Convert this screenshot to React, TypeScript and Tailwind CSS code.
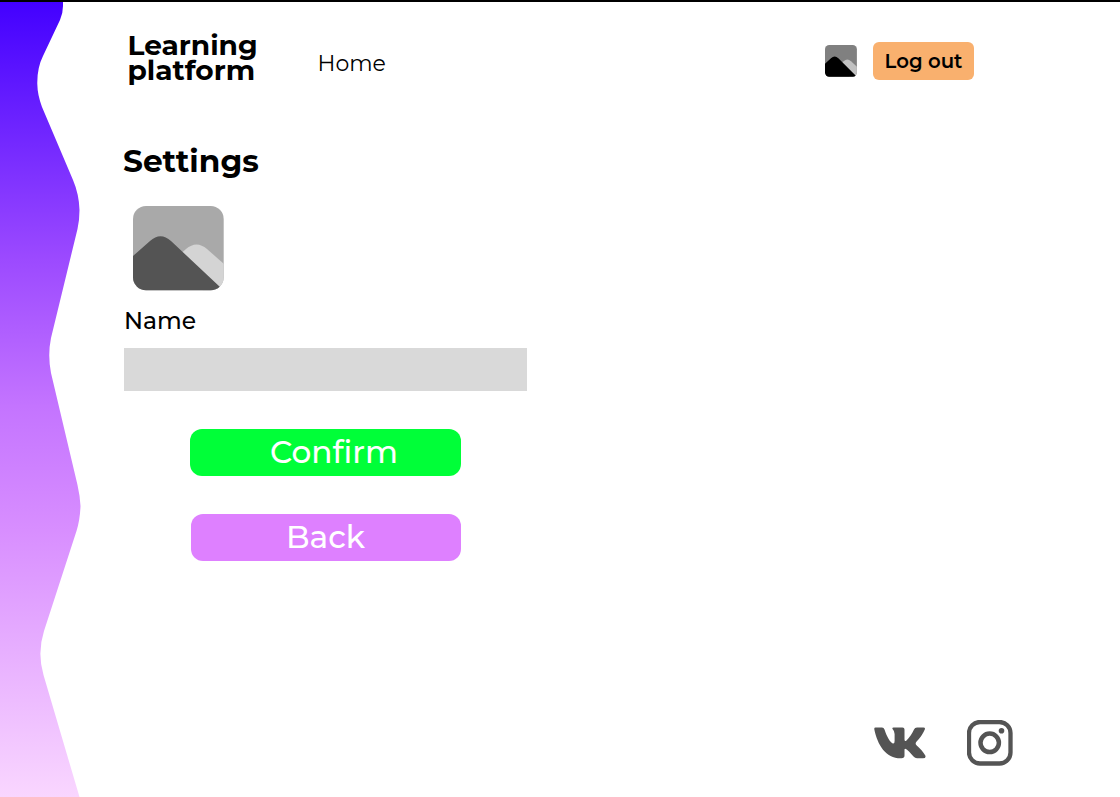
function Wave() {
  return (
    <svg className="h-[795px] w-[82px] shrink-0" viewBox="0 2 82 795" aria-hidden="true">
      <defs>
        <linearGradient id="wave" x1="0" y1="0" x2="0" y2="797" gradientUnits="userSpaceOnUse">
          <stop offset="0" stopColor="#4200ff" />
          <stop offset="0.326" stopColor="#9c4aff" />
          <stop offset="0.51" stopColor="#c474ff" />
          <stop offset="0.665" stopColor="#d88eff" />
          <stop offset="1" stopColor="#f9d6ff" />
        </linearGradient>
      </defs>
      <path
        fill="url(#wave)"
        d="M0 0H63V6Q63 13 60 20L43 56Q37 68 37.300 84Q37.500 95 42 107L73 180Q79 194 79.500 210Q79.500 220 77.500 229L51 338Q47.500 355 51 373L77.500 485Q80 496 80.500 506Q80 520 76.500 531L44 631Q37 653 43.500 675L79.500 797H0Z"
      />
    </svg>
  );
}

function Picture({ className, sky, far, near, id, rx, ry }: {
  className: string;
  sky: string;
  far: string;
  near: string;
  id: string;
  rx: number;
  ry: number;
}) {
  return (
    <svg className={className} viewBox="0 0 91 85" preserveAspectRatio="none" aria-hidden="true">
      <clipPath id={id}>
        <rect width="90.700" height="84.300" rx={rx} ry={ry} />
      </clipPath>
      <g clipPath={`url(#${id})`}>
        <rect width="91" height="85" fill={sky} />
        <path fill={far} d="M45 50L53 43Q63.500 34 74 43L91 58V85H70Z" />
        <path fill={near} d="M0 50L17 35Q27.500 25.500 38 35L87 81V85H0Z" />
      </g>
    </svg>
  );
}

function VkIcon() {
  return (
    <svg className="h-8 w-[52px]" viewBox="0 0 52 32" fill="#545454" aria-hidden="true">
      <path d="M1.500 .5H8Q9.800 .5 10.500 2.500C13 10 16 15 18.800 16.500Q20.600 17 20.600 14V7Q20.500 4 18.700 2.300Q17.700 .5 19.500 .5H28.500Q30.500 .5 30.500 2.500V12.500Q30.700 15 32.500 13.500C35.500 10.500 38.500 6 40 2.500Q40.800 .5 43 .5H49.500Q51.500 .5 50.800 2.500C49 7 45.500 11.500 42.200 15Q41 16.700 42.500 18.200C46 21.500 49.500 25 51.300 28.500Q52.300 31.300 49 31.300H43Q41 31.300 39.500 29.500L35 24.500Q31 20.300 30.500 22.500V28.500Q30.500 31.300 27.500 31.300C12 31.800 3.500 18 .3 2.200Q0 .5 1.500 .5Z" />
    </svg>
  );
}

function InstagramIcon() {
  return (
    <svg className="size-[46px]" viewBox="0 0 46 46" fill="none" stroke="#545454" aria-hidden="true">
      <rect x="2" y="2" width="41.500" height="41.500" rx="11" strokeWidth="4.300" />
      <circle cx="22.700" cy="22.800" r="9.200" strokeWidth="4.500" />
      <circle cx="34.500" cy="10.800" r="2.800" fill="#545454" stroke="none" />
    </svg>
  );
}

export default function App() {
  return (
    <div className="flex h-[797px] w-[1120px] overflow-hidden border-t-2 border-black bg-white font-[Montserrat,Inter,sans-serif] text-black">
      <Wave />
      <div className="flex min-w-0 flex-1 flex-col pl-[41px]">
        <header className="flex h-[100px] items-start pl-[4.500px]">
          <div className="mt-[31px] w-[190px] text-[28px] leading-[25px] font-bold">
            <div>Learning</div>
            <div>platform</div>
          </div>
          <a className="mt-[47px] text-[22px] leading-[30px] font-normal" href="#home">Home</a>
          <div className="mt-10 mr-[146px] ml-auto flex items-start gap-4">
            <Picture className="mt-[3px] h-8 w-[32px]" id="avatar-small" sky="#808080" far="#c1c1c1" near="#000000" rx={12} ry={11} />
            <button className="h-[37.500px] w-[101px] rounded-[6px] bg-[#f9b06e] text-[19.700px] leading-[38px] font-semibold whitespace-nowrap">
              Log out
            </button>
          </div>
        </header>
        <main className="flex w-[404px] flex-1 flex-col items-start">
          <h1 className="mt-[39px] h-10 text-[31.200px] leading-10 font-bold">Settings</h1>
          <Picture className="mt-[25px] ml-[10px] h-[85px] w-[91px]" id="avatar-large" sky="#a9a9a9" far="#d4d4d4" near="#545454" rx={13} ry={13} />
          <label className="mt-[14px] ml-px h-8 text-[23.400px] leading-8 font-medium" htmlFor="name">Name</label>
          <input id="name" className="mt-[11px] ml-px h-[42.500px] w-[403px] bg-[#d9d9d9] outline-none" />
          <button className="mt-[38.500px] ml-[67px] h-[46.500px] w-[271px] rounded-[12px] bg-[#00ff38] pl-[80px] text-left text-[31.200px] leading-[46px] font-medium text-white">
            Confirm
          </button>
          <button className="mt-[38.500px] ml-[68px] h-[46.500px] w-[270px] rounded-[12px] bg-[#de80ff] pl-[95px] text-left text-[31.200px] leading-[46px] font-medium text-white">
            Back
          </button>
        </main>
        <footer className="mr-[107px] mb-[31px] flex items-center justify-end gap-[41.500px]">
          <a href="#vk" aria-label="VK"><VkIcon /></a>
          <a href="#instagram" aria-label="Instagram"><InstagramIcon /></a>
        </footer>
      </div>
    </div>
  );
}
